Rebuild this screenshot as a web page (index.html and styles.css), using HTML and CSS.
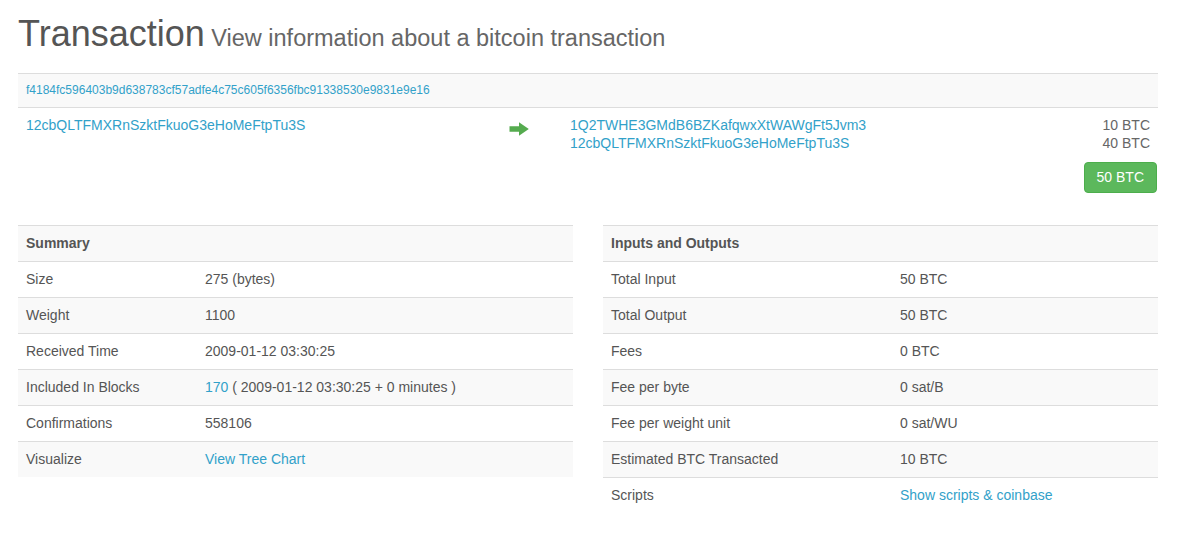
FILE: index.html
```html
<!DOCTYPE html>
<html>
<head>
<meta charset="utf-8">
<link rel="stylesheet" href="styles.css">
</head>
<body>
<div class="page">
  <h1 class="title">Transaction<small> View information about a bitcoin transaction</small></h1>

  <div class="tx">
    <div class="tx-hash"><a href="#">f4184fc596403b9d638783cf57adfe4c75c605f6356fbc91338530e9831e9e16</a></div>
    <div class="tx-body">
      <div class="tx-inputs"><a href="#">12cbQLTFMXRnSzktFkuoG3eHoMeFtpTu3S</a></div>
      <div class="tx-arrow">
        <svg width="20" height="14" viewBox="0 0 20 14"><path d="M0.5 4.3 H10 V0.3 L19.8 7 L10 13.7 V9.7 H0.5 Z" fill="#55ab4f"/></svg>
      </div>
      <div class="tx-outputs">
        <div class="out-row"><a href="#">1Q2TWHE3GMdB6BZKafqwxXtWAWgFt5Jvm3</a><span class="amt">10 BTC</span></div>
        <div class="out-row"><a href="#">12cbQLTFMXRnSzktFkuoG3eHoMeFtpTu3S</a><span class="amt">40 BTC</span></div>
        <div class="out-total"><span class="btn-total">50 BTC</span></div>
      </div>
    </div>
  </div>

  <div class="panels">
    <table class="info info-summary">
      <colgroup><col class="c1"><col></colgroup>
      <tr><th colspan="2">Summary</th></tr>
      <tr><td>Size</td><td>275 (bytes)</td></tr>
      <tr><td>Weight</td><td>1100</td></tr>
      <tr><td>Received Time</td><td>2009-01-12 03:30:25</td></tr>
      <tr><td>Included In Blocks</td><td><a href="#">170</a> ( 2009-01-12 03:30:25 + 0 minutes )</td></tr>
      <tr><td>Confirmations</td><td>558106</td></tr>
      <tr><td>Visualize</td><td><a href="#">View Tree Chart</a></td></tr>
    </table>
    <table class="info info-io">
      <colgroup><col class="c1"><col></colgroup>
      <tr><th colspan="2">Inputs and Outputs</th></tr>
      <tr><td>Total Input</td><td>50 BTC</td></tr>
      <tr><td>Total Output</td><td>50 BTC</td></tr>
      <tr><td>Fees</td><td>0 BTC</td></tr>
      <tr><td>Fee per byte</td><td>0 sat/B</td></tr>
      <tr><td>Fee per weight unit</td><td>0 sat/WU</td></tr>
      <tr><td>Estimated BTC Transacted</td><td>10 BTC</td></tr>
      <tr><td>Scripts</td><td><a href="#">Show scripts &amp; coinbase</a></td></tr>
    </table>
  </div>
</div>
</body>
</html>
```

FILE: styles.css
```css
html, body {
  margin: 0;
  padding: 0;
  background: #fff;
}
body {
  font-family: "Liberation Sans", Arial, Helvetica, sans-serif;
  font-size: 14px;
  color: #555;
}
a {
  color: #32a1c9;
  text-decoration: none;
}
.page {
  width: 1140px;
  margin-left: 18px;
}
.title {
  margin: 14px 0 19px 0;
  font-size: 36px;
  line-height: 40px;
  height: 40px;
  font-weight: normal;
  color: #555;
}
.title small {
  font-size: 23.5px;
  line-height: 1;
  color: #666;
}

.tx {
  margin-bottom: 24px;
}
.tx-hash {
  border-top: 1px solid #ddd;
  background: #f9f9f9;
  padding: 8px;
  font-size: 12px;
  line-height: 17px;
}
.tx-body {
  border-top: 1px solid #ddd;
  display: grid;
  grid-template-columns: 476px 68px 1fr;
}
.tx-inputs {
  padding: 8px;
  line-height: 18px;
}
.tx-arrow {
  padding: 14px 0 0 15px;
}
.tx-arrow svg {
  display: block;
}
.tx-outputs {
  padding: 8px;
  line-height: 18px;
}
.out-row {
  display: flex;
  justify-content: space-between;
}
.amt {
  color: #666;
}
.out-total {
  display: flex;
  justify-content: flex-end;
  margin: 10px -7px 0 0;
}
.btn-total {
  display: inline-block;
  background: #5cb85c;
  border: 1px solid #4cae4c;
  color: #fff;
  border-radius: 4px;
  padding: 5px 12px;
  line-height: 19px;
  font-size: 14px;
}

.panels {
  display: flex;
  gap: 30px;
  align-items: flex-start;
}
.info {
  width: 555px;
  table-layout: fixed;
  border-collapse: collapse;
  border-spacing: 0;
}
.info-summary .c1 {
  width: 179px;
}
.info-io .c1 {
  width: 289px;
}
.info th,
.info td {
  border-top: 1px solid #ddd;
  padding: 8px;
  line-height: 19px;
  text-align: left;
  vertical-align: top;
}
.info th {
  font-weight: bold;
  color: #555;
}
.info tr:nth-child(odd) {
  background: #f9f9f9;
}
```
